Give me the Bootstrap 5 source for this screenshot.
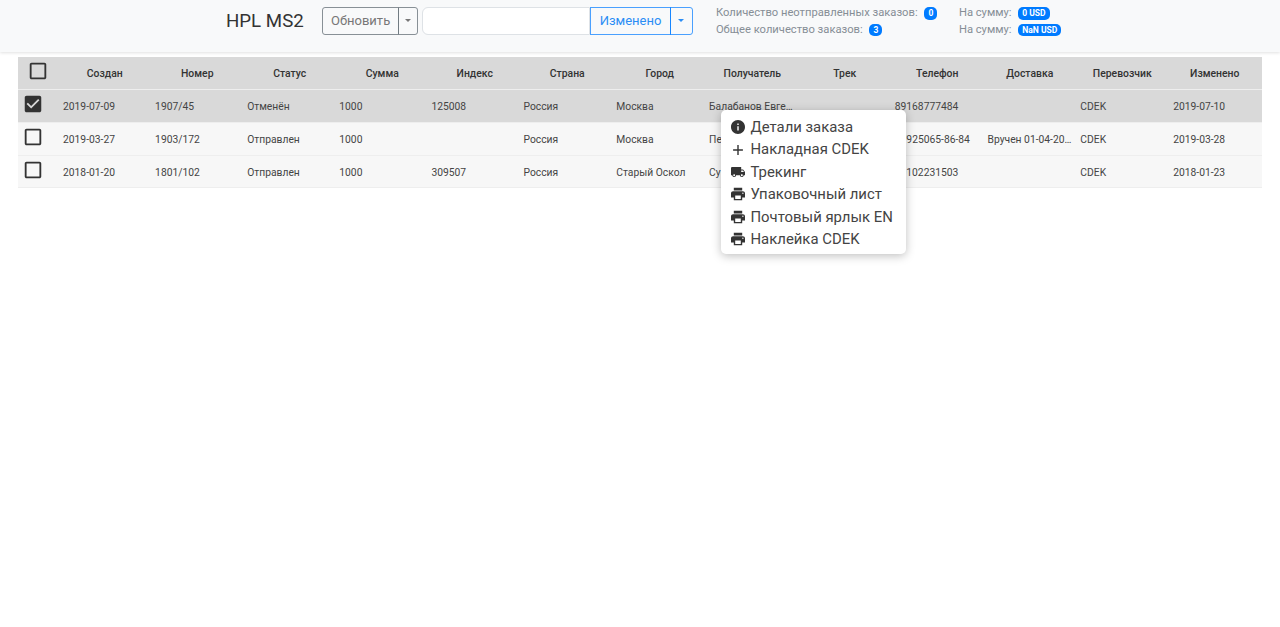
<!DOCTYPE html>
<html lang="ru">
<head>
    <meta charset="UTF-8">
    <meta name="viewport" content="width=device-width, initial-scale=1.0">
    <title>HPL MS2</title>
    <link rel="stylesheet" href="https://cdn.jsdelivr.net/npm/bootstrap@5.3.3/dist/css/bootstrap.min.css">
    <style>
        body {
            font-family: Roboto, "Liberation Sans", sans-serif;
            background: #fff;
        }

        .top-bar {
            height: 52px;
            padding: 7px 0 0 226px;
            background: #f8f9fa;
            box-shadow: 0 1px 3px rgba(0, 0, 0, .12);
            align-items: flex-start;
        }

        .top-title {
            font-size: 18.7px;
            line-height: 28px;
            width: 96px;
            color: #333;
        }

        .top-bar .btn {
            font-size: 13px;
            line-height: 26px;
            height: 28px;
            padding: 0 8px;
            --bs-btn-border-radius: 3px;
        }

        .top-bar .btn-outline-secondary {
            --bs-btn-color: #777;
            --bs-btn-border-color: rgba(108, 117, 125, .8);
        }

        .top-bar .btn-outline-primary {
            --bs-btn-color: #2a8df5;
            --bs-btn-border-color: rgba(0, 123, 255, .7);
            padding: 0 8.5px;
        }

        .top-bar .btn-outline-secondary.dropdown-toggle-split {
            padding: 0 6px;
        }

        .top-bar .btn-outline-primary.dropdown-toggle-split {
            padding: 0 7.5px;
        }

        .search-field {
            width: 168px;
            height: 28px;
            margin-left: 4px;
            border-color: #dee2e6;
            border-top-right-radius: 0;
            border-bottom-right-radius: 0;
        }

        .stats-grid {
            display: grid;
            grid-template-columns: 243px auto;
            margin: -2px 0 0 23px;
            font-size: 11.2px;
            line-height: 16.5px;
            color: #868e96;
        }

        .stats-grid .badge {
            font-size: 8.5px;
            font-weight: 700;
            padding: 2px 4px;
            margin-left: 4px;
            border-radius: 5px;
            background: #007bff;
        }

        .orders {
            margin: 5px 18px 0;
            font-size: 10.3px;
            color: #444;
        }

        .order-row {
            height: 32.8px;
            padding: 2px 4px 0 0;
            align-items: center;
            background: #f7f7f7;
            border-bottom: 1px solid #eee;
        }

        .order-row.picked,
        .order-head {
            background: #d9d9d9;
        }

        .order-head {
            height: 33px;
            padding-right: 1px;
            font-size: 10.4px;
            font-weight: 500;
            color: #333;
            text-align: center;
            border-bottom: 1px solid #eee;
        }

        .tick-col {
            flex: 0 0 37px;
            padding-left: 4px;
            height: 22px;
            margin-top: -5px;
        }

        .order-head .tick-col {
            flex-basis: 40.5px;
            padding-left: 9.25px;
            margin-top: -6px;
        }

        .cell {
            flex: 1 1 0;
            min-width: 0;
            padding: 0 0 0 8px;
        }

        /* первые колонки чуть уже остальных */
        .order-row:not(.order-head) .cell:nth-child(-n+6) {
            flex: 0 0 92.1px;
        }

        .order-head .cell {
            padding: 0 4px;
        }

        .tick-col svg {
            display: block;
            fill: #333;
        }

        .row-menu {
            top: 110px;
            left: 721px;
            width: 185px;
            height: 144px;
            padding: 6px 0 5px;
            border: 0;
            border-radius: 5px;
            box-shadow: 0 2px 10px rgba(0, 0, 0, .25);
        }

        .row-menu .dropdown-item {
            height: 22.4px;
            padding: 0 0 0 10px;
            font-size: 14.9px;
            line-height: 22.4px;
            color: #444;
            gap: 5.5px;
        }

        .row-menu svg {
            fill: #333;
            flex: 0 0 14px;
        }
    </style>
</head>
<body>

    <nav class="top-bar d-flex">
        <div class="top-title">HPL MS2</div>
        <div class="btn-group">
            <button type="button" class="btn btn-outline-secondary">Обновить</button>
            <button type="button" class="btn btn-outline-secondary dropdown-toggle dropdown-toggle-split"></button>
        </div>
        <div class="d-flex">
            <input type="text" class="form-control search-field">
            <div class="btn-group">
                <button type="button" class="btn btn-outline-primary rounded-start-0">Изменено</button>
                <button type="button" class="btn btn-outline-primary dropdown-toggle dropdown-toggle-split"></button>
            </div>
        </div>
        <div class="stats-grid">
            <div>Количество неотправленных заказов: <span class="badge">0</span></div>
            <div>На сумму: <span class="badge">0 USD</span></div>
            <div>Общее количество заказов: <span class="badge">3</span></div>
            <div>На сумму: <span class="badge">NaN USD</span></div>
        </div>
    </nav>

    <div class="orders">
        <div class="order-row order-head d-flex">
            <div class="tick-col"><svg width="22" height="22" viewBox="0 0 24 24"><path d="M19 5v14H5V5h14m0-2H5c-1.1 0-2 .9-2 2v14c0 1.1.9 2 2 2h14c1.1 0 2-.9 2-2V5c0-1.1-.9-2-2-2z"/></svg></div>
            <div class="cell">Создан</div>
            <div class="cell">Номер</div>
            <div class="cell">Статус</div>
            <div class="cell">Сумма</div>
            <div class="cell">Индекс</div>
            <div class="cell">Страна</div>
            <div class="cell">Город</div>
            <div class="cell">Получатель</div>
            <div class="cell">Трек</div>
            <div class="cell">Телефон</div>
            <div class="cell">Доставка</div>
            <div class="cell">Перевозчик</div>
            <div class="cell">Изменено</div>
        </div>
        <div class="order-row picked d-flex">
            <div class="tick-col"><svg width="22" height="22" viewBox="0 0 24 24"><path d="M19 3H5c-1.11 0-2 .9-2 2v14c0 1.1.89 2 2 2h14c1.11 0 2-.9 2-2V5c0-1.1-.89-2-2-2zm-9 14l-5-5 1.41-1.41L10 14.17l7.59-7.59L19 8l-9 9z"/></svg></div>
            <div class="cell">2019-07-09</div>
            <div class="cell">1907/45</div>
            <div class="cell">Отменён</div>
            <div class="cell">1000</div>
            <div class="cell">125008</div>
            <div class="cell">Россия</div>
            <div class="cell">Москва</div>
            <div class="cell text-truncate">Балабанов Евгений</div>
            <div class="cell"></div>
            <div class="cell">89168777484</div>
            <div class="cell"></div>
            <div class="cell">CDEK</div>
            <div class="cell">2019-07-10</div>
        </div>
        <div class="order-row d-flex">
            <div class="tick-col"><svg width="22" height="22" viewBox="0 0 24 24"><path d="M19 5v14H5V5h14m0-2H5c-1.1 0-2 .9-2 2v14c0 1.1.9 2 2 2h14c1.1 0 2-.9 2-2V5c0-1.1-.9-2-2-2z"/></svg></div>
            <div class="cell">2019-03-27</div>
            <div class="cell">1903/172</div>
            <div class="cell">Отправлен</div>
            <div class="cell">1000</div>
            <div class="cell"></div>
            <div class="cell">Россия</div>
            <div class="cell">Москва</div>
            <div class="cell">Пе</div>
            <div class="cell"></div>
            <div class="cell">+7925065-86-84</div>
            <div class="cell text-truncate">Вручен 01-04-2019</div>
            <div class="cell">CDEK</div>
            <div class="cell">2019-03-28</div>
        </div>
        <div class="order-row d-flex">
            <div class="tick-col"><svg width="22" height="22" viewBox="0 0 24 24"><path d="M19 5v14H5V5h14m0-2H5c-1.1 0-2 .9-2 2v14c0 1.1.9 2 2 2h14c1.1 0 2-.9 2-2V5c0-1.1-.9-2-2-2z"/></svg></div>
            <div class="cell">2018-01-20</div>
            <div class="cell">1801/102</div>
            <div class="cell">Отправлен</div>
            <div class="cell">1000</div>
            <div class="cell">309507</div>
            <div class="cell">Россия</div>
            <div class="cell">Старый Оскол</div>
            <div class="cell">Су</div>
            <div class="cell"></div>
            <div class="cell">89102231503</div>
            <div class="cell"></div>
            <div class="cell">CDEK</div>
            <div class="cell">2018-01-23</div>
        </div>
    </div>

    <!-- контекстное меню строки -->
    <div class="dropdown-menu d-block position-absolute row-menu">
        <a class="dropdown-item d-flex align-items-center" href="#"><svg width="14" height="14" viewBox="2 2 20 20"><path d="M12 2C6.48 2 2 6.48 2 12s4.48 10 10 10 10-4.48 10-10S17.52 2 12 2zm1 15h-2v-6h2v6zm0-8h-2V7h2v2z"/></svg>Детали заказа</a>
        <a class="dropdown-item d-flex align-items-center" href="#"><svg width="14" height="14" viewBox="2 2 20 20"><path d="M19 13h-6v6h-2v-6H5v-2h6V5h2v6h6v2z"/></svg>Накладная CDEK</a>
        <a class="dropdown-item d-flex align-items-center" href="#"><svg width="14" height="14" viewBox="1 2 22 20"><path d="M20 8h-3V4H3c-1.1 0-2 .9-2 2v11h2c0 1.66 1.34 3 3 3s3-1.34 3-3h6c0 1.66 1.34 3 3 3s3-1.34 3-3h2v-5l-3-4zM6 18.5c-.83 0-1.5-.67-1.5-1.5s.67-1.5 1.5-1.5 1.5.67 1.5 1.5-.67 1.5-1.5 1.5zm13.5-9l1.96 2.5H17V9.5h2.5zm-1.5 9c-.83 0-1.5-.67-1.5-1.5s.67-1.5 1.5-1.5 1.5.67 1.5 1.5-.67 1.5-1.5 1.5z"/></svg>Трекинг</a>
        <a class="dropdown-item d-flex align-items-center" href="#"><svg width="14" height="14" viewBox="2 2 20 20"><path d="M19 8H5c-1.66 0-3 1.34-3 3v6h4v4h12v-4h4v-6c0-1.66-1.34-3-3-3zm-3 11H8v-5h8v5zm3-7c-.55 0-1-.45-1-1s.45-1 1-1 1 .45 1 1-.45 1-1 1zm-1-9H6v4h12V3z"/></svg>Упаковочный лист</a>
        <a class="dropdown-item d-flex align-items-center" href="#"><svg width="14" height="14" viewBox="2 2 20 20"><path d="M19 8H5c-1.66 0-3 1.34-3 3v6h4v4h12v-4h4v-6c0-1.66-1.34-3-3-3zm-3 11H8v-5h8v5zm3-7c-.55 0-1-.45-1-1s.45-1 1-1 1 .45 1 1-.45 1-1 1zm-1-9H6v4h12V3z"/></svg>Почтовый ярлык EN</a>
        <a class="dropdown-item d-flex align-items-center" href="#"><svg width="14" height="14" viewBox="2 2 20 20"><path d="M19 8H5c-1.66 0-3 1.34-3 3v6h4v4h12v-4h4v-6c0-1.66-1.34-3-3-3zm-3 11H8v-5h8v5zm3-7c-.55 0-1-.45-1-1s.45-1 1-1 1 .45 1 1-.45 1-1 1zm-1-9H6v4h12V3z"/></svg>Наклейка CDEK</a>
    </div>

    <script src="https://cdn.jsdelivr.net/npm/bootstrap@5.3.3/dist/js/bootstrap.bundle.min.js"></script>
</body>
</html>
